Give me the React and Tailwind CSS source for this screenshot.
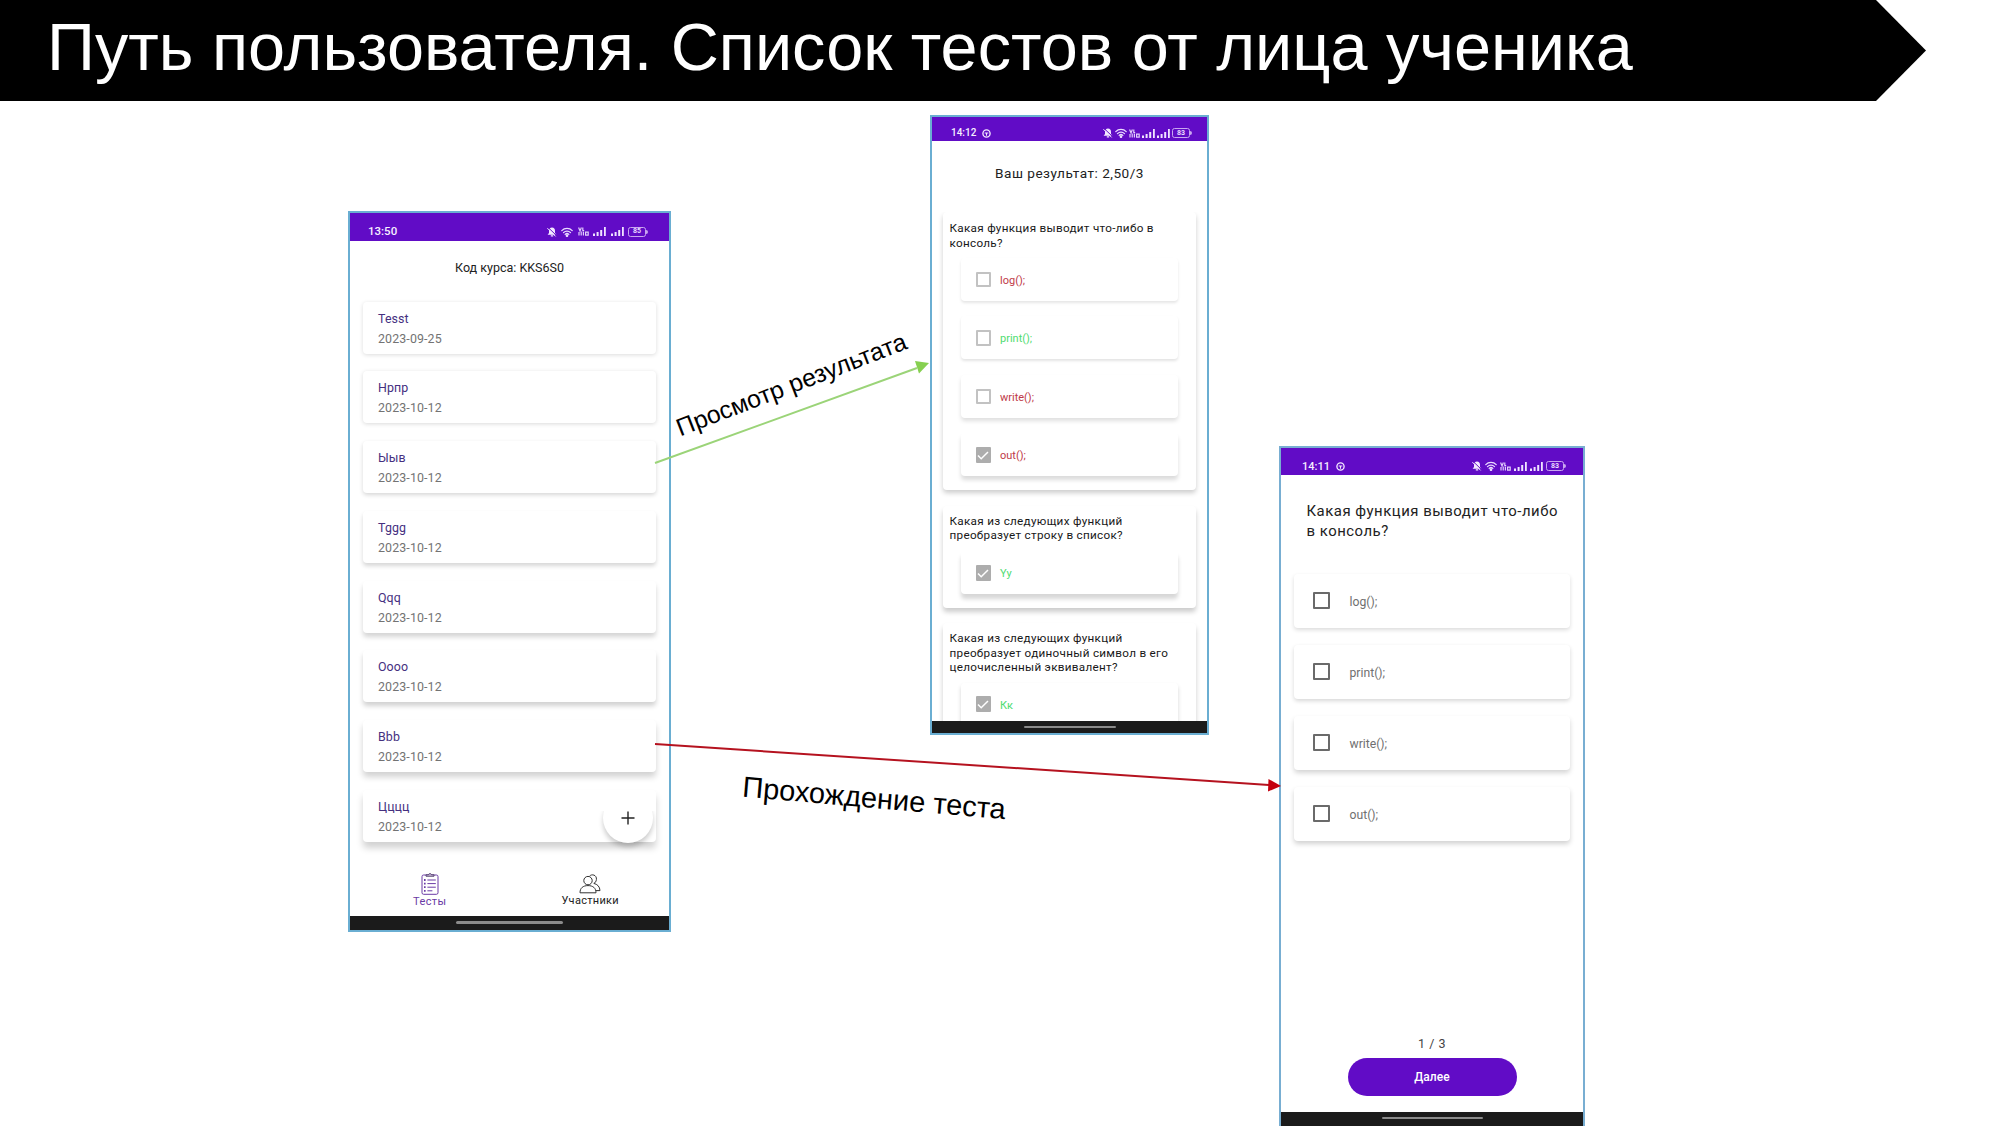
import React from "react";

const BellOff = () => (
  <svg viewBox="0 0 10 10" className="h-[10px] w-[10px] shrink-0">
    <path d="M5 0.6C3 .6 2 2.200 2 4v2L.6 7.800h8.800L8 6V4C8 2.200 7 .6 5 .6ZM3.800 8.200h2.400v1.200H3.800z" fill="#f3e9ff" />
    <path d="M1 .4l8.800 8.400" stroke="#610cc6" strokeWidth="1" />
    <path d="M.4 1.200l8.200 8.200" stroke="#f3e9ff" strokeWidth="1" />
  </svg>
);
const Wifi = () => (
  <svg viewBox="0 0 12 10" className="h-[10px] w-[12px] shrink-0" fill="none" stroke="#eadcff" strokeWidth="1.3" strokeLinecap="round">
    <path d="M.8 3.6C3.6.6 8.4.6 11.2 3.6M2.5 5.6c2-2 5-2 7 0M4.2 7.4c1-1 2.6-1 3.6 0" />
    <circle cx="6" cy="8.7" r=".7" fill="#eadcff" />
  </svg>
);
const Net = () => (
  <svg viewBox="0 0 11 9" className="h-[9px] w-[11px] shrink-0" fill="none" stroke="#e2cffb" strokeWidth="1.2">
    <path d="M.6 .6L2 4 3.4 .6M4.8 .6v3h1.4M1 5v3.6M3.200 4.600v4M5.400 4.800v3.800M7.600 5.200h2.600v2.900H7.600z" />
  </svg>
);
const Bars = () => (
  <svg viewBox="0 0 13 9" className="h-[9px] w-[13px] shrink-0" fill="#f0e4ff">
    <path d="M0 6.5h2V9H0zM3.6 5h2v4h-2zM7.2 3h2v6h-2zM11 0h1.8v9H11z" />
  </svg>
);
const Battery = ({ level }) => (
  <span className="relative flex h-[10px] w-[18px] shrink-0 items-center justify-center rounded-[2.5px] border border-[#c9a6f0] font-['Roboto',sans-serif] text-[7px] leading-none font-bold text-[#eadcff]">
    {level}
    <span className="absolute -right-[2.5px] h-[4px] w-[1.5px] rounded-r bg-[#c9a6f0]" />
  </span>
);
const Gear = () => (
  <svg viewBox="0 0 10 10" className="h-[9px] w-[9px] shrink-0" fill="none" stroke="#f3e9ff">
    <circle cx="5" cy="5" r="4" strokeWidth="1.5" />
    <path d="M3 4.4h4M5 4.400v3" strokeWidth="1.200" />
  </svg>
);

function StatusBar({ time, gear, level, className, gap }) {
  return (
    <div className={`flex shrink-0 items-center bg-[#610cc6] text-[#f6efff] ${className}`}>
      <span className="leading-none font-medium">{time}</span>
      {gear && <span className="ml-[6px] flex"><Gear /></span>}
      <span className={`ml-auto flex items-center ${gap}`}>
        <BellOff />
        <Wifi />
        <Net />
        <Bars />
        <Bars />
        <Battery level={level} />
      </span>
    </div>
  );
}

function HomeBar({ className, handle }) {
  return (
    <div className={`flex shrink-0 items-center justify-center bg-[#1b1b1b] ${className}`}>
      <span className={`rounded-full bg-[#8b8b8b] ${handle}`} />
    </div>
  );
}

const tests = [
  ["Tesst", "2023-09-25"],
  ["Нрпр", "2023-10-12"],
  ["Ыыв", "2023-10-12"],
  ["Tggg", "2023-10-12"],
  ["Qqq", "2023-10-12"],
  ["Оооо", "2023-10-12"],
  ["Bbb", "2023-10-12"],
  ["Цццц", "2023-10-12"],
];
const cardShadows = [
  "shadow-[0_1px_4px_rgba(0,0,0,0.14)]",
  "shadow-[0_1px_4px_rgba(0,0,0,0.15)]",
  "shadow-[0_2px_4px_rgba(0,0,0,0.16)]",
  "shadow-[0_3px_4px_rgba(0,0,0,0.16)]",
  "shadow-[0_4px_5px_rgba(0,0,0,0.17)]",
  "shadow-[0_4px_5px_rgba(0,0,0,0.18)]",
  "shadow-[0_5px_6px_rgba(0,0,0,0.18)]",
  "shadow-[0_6px_7px_rgba(0,0,0,0.18)]",
];

function TestsPhone() {
  return (
    <section className="absolute top-[211px] left-[348px] flex h-[721px] w-[323px] flex-col border-2 border-[#6aaed2] bg-white">
      <StatusBar time="13:50" level="85" gap="gap-[4.5px]" className="h-[28px] pt-[9px] pr-[23px] pl-[18px] text-[11.5px]" />
      <div className="mt-[19px] flex h-[16px] items-center justify-center text-[12.5px] text-[#222]">Код курса: KKS6S0</div>
      <div className="mt-[25.5px] flex flex-col gap-[17.8px] px-[13px]">
        {tests.map(([name, date], i) => (
          <div key={i} className={`flex h-[52px] shrink-0 flex-col rounded-[4px] bg-white pt-[7px] pl-[15px] ${cardShadows[i]}`}>
            <div className="h-[20px] text-[12.4px] leading-[20px] tracking-[0.1px] text-[#45307f]">{name}</div>
            <div className="text-[12.4px] leading-[20px] tracking-[0.12px] text-[#737373]">{date}</div>
          </div>
        ))}
      </div>
      <div className="absolute top-[580px] left-[253px] flex h-[50px] w-[50px] items-center justify-center rounded-full bg-white [clip-path:inset(18px_-12px_-14px_-12px)] shadow-[0_4px_5px_rgba(0,0,0,0.2)]">
        <svg viewBox="0 0 14 14" className="h-[14px] w-[14px]" stroke="#222" strokeWidth="1.4">
          <path d="M7 .5v13M.5 7h13" />
        </svg>
      </div>
      <nav className="mt-auto grid h-[46px] shrink-0 grid-cols-2 text-[11px]">
        <div className="flex flex-col items-center text-[#6a3aa5]">
          <svg viewBox="0 0 18 22" className="mt-[3px] h-[22px] w-[18px]" fill="none" stroke="#6a3aa5" strokeWidth="1">
            <rect x="1" y="2" width="16" height="19.3" rx="1.6" />
            <path d="M5 3.2V1.8h2.4C7.6.3 10.4.3 10.6 1.8H13v1.4z" fill="#d9cce8" stroke="#55406f" />
            <path d="M3 7h1.6M3 10.6h1.6M3 14.2h1.6M3 17.8h1.6" strokeWidth="1.8" />
            <path d="M6.4 7h8.4M6.4 10.6h8.4M6.4 14.2h8.4M6.4 17.8h5" />
          </svg>
          <span className="mt-[0.5px] leading-[14px] tracking-[0.4px]">Тесты</span>
        </div>
        <div className="flex flex-col items-center pl-[2px] text-[#222]">
          <svg viewBox="0 0 22 20" className="mt-[4px] h-[20px] w-[22px]" fill="none" stroke="#333" strokeWidth="1">
            <circle cx="9" cy="6.6" r="4.2" />
            <path d="M1 18.8c0-4.8 3-7.2 8-7.2s8 2.4 8 7.2z" />
            <path d="M10.5 2.2C12.6-.4 18 .8 17.4 5.6c-.2 1.8-1.2 3.2-2.6 3.8 3.6.8 6 3.2 6.2 7.200h-4" />
          </svg>
          <span className="mt-[0.5px] leading-[14px] tracking-[0.3px]">Участники</span>
        </div>
      </nav>
      <HomeBar className="h-[14.5px]" handle="h-[3px] w-[107px]" />
    </section>
  );
}

function CheckBox({ checked }) {
  return checked ? (
    <span className="flex h-[15.5px] w-[15.5px] shrink-0 items-center justify-center rounded-[1px] bg-[#adadad]">
      <svg viewBox="0 0 12 12" className="h-[12px] w-[12px]" fill="none" stroke="#fff" strokeWidth="1.5">
        <path d="M1 6.5l3.2 3.2L11 3" />
      </svg>
    </span>
  ) : (
    <span className="h-[15.5px] w-[15.5px] shrink-0 rounded-[1px] border-2 border-[#c2c2c2]" />
  );
}

const results = [
  {
    lines: ["Какая функция выводит что-либо в", "консоль?"],
    box: "h-[278px] pt-[9px] shadow-[0_3px_5px_rgba(0,0,0,0.2)]",
    gap: "mt-[7.5px]",
    options: [
      ["log();", false, "text-[#c03a48]", "shadow-[0_2px_3px_rgba(0,0,0,0.10)]"],
      ["print();", false, "text-[#4fdc70]", "shadow-[0_2px_3px_rgba(0,0,0,0.11)]"],
      ["write();", false, "text-[#c03a48]", "shadow-[0_3px_4px_rgba(0,0,0,0.13)]"],
      ["out();", true, "text-[#c03a48]", "shadow-[0_4px_4px_rgba(0,0,0,0.14)]"],
    ],
  },
  {
    lines: ["Какая из следующих функций", "преобразует строку в список?"],
    box: "h-[102px] pt-[8px] shadow-[0_4px_5px_rgba(0,0,0,0.2)]",
    gap: "mt-[8.5px]",
    options: [["Yy", true, "text-[#4fdc70]", "shadow-[0_5px_4px_rgba(0,0,0,0.16)]"]],
  },
  {
    lines: ["Какая из следующих функций", "преобразует одиночный символ в его", "целочисленный эквивалент?"],
    box: "h-[140px] pt-[8px] shadow-[0_4px_5px_rgba(0,0,0,0.2)]",
    gap: "mt-[7.5px]",
    options: [["Кк", true, "text-[#4fdc70]", "shadow-[0_3px_4px_rgba(0,0,0,0.17)]"]],
  },
];

function ResultPhone() {
  return (
    <section className="absolute top-[115px] left-[930px] flex h-[620px] w-[279px] flex-col overflow-hidden border-2 border-[#6aaed2] bg-white">
      <StatusBar time="14:12" gear level="83" gap="gap-[2px]" className="h-[24px] pt-[8px] pr-[17px] pl-[19px] text-[10px]" />
      <div className="mt-[23px] flex h-[18px] shrink-0 items-center justify-center text-[13.6px] tracking-[0.48px] text-[#222]">Ваш результат: 2,50/3</div>
      <div className="mt-[30px] flex min-h-0 flex-1 flex-col gap-[15.5px] overflow-hidden px-[11px]">
        {results.map((q, i) => (
          <div key={i} className={`flex shrink-0 flex-col rounded-[4px] bg-white ${q.box}`}>
            <div className="pl-[6.5px] text-[11.7px] leading-[14.7px] tracking-[0.3px] text-[#181818]">
              {q.lines.map((l) => (
                <div key={l} className="whitespace-nowrap">{l}</div>
              ))}
            </div>
            <div className={`flex flex-col gap-[15.5px] px-[18px] ${q.gap}`}>
              {q.options.map(([label, checked, color, shadow]) => (
                <div key={label} className={`flex h-[43px] shrink-0 items-center rounded-[4px] bg-white pl-[14.5px] ${shadow}`}>
                  <CheckBox checked={checked} />
                  <span className={`ml-[9px] pt-[2px] text-[11px] leading-none ${color}`}>{label}</span>
                </div>
              ))}
            </div>
          </div>
        ))}
      </div>
      <HomeBar className="h-[12px]" handle="h-[2px] w-[92px]" />
    </section>
  );
}

const answers = [
  ["log();", "shadow-[0_2px_4px_rgba(0,0,0,0.14)]"],
  ["print();", "shadow-[0_2px_4px_rgba(0,0,0,0.16)]"],
  ["write();", "shadow-[0_3px_5px_rgba(0,0,0,0.17)]"],
  ["out();", "shadow-[0_3px_5px_rgba(0,0,0,0.18)]"],
];

function QuizPhone() {
  return (
    <section className="absolute top-[446px] left-[1279px] flex h-[680px] w-[306px] flex-col border-2 border-b-0 border-[#78aed2] bg-white">
      <StatusBar time="14:11" gear level="83" gap="gap-[3px]" className="h-[27px] pt-[9px] pr-[19px] pl-[21px] text-[11px]" />
      <div className="mt-[26px] pl-[25.5px] text-[14.9px] leading-[20.3px] tracking-[0.52px] whitespace-nowrap text-[#222]">
        <div>Какая функция выводит что-либо</div>
        <div>в консоль?</div>
      </div>
      <div className="mt-[32.4px] flex flex-col gap-[16.9px] px-[13px]">
        {answers.map(([a, shadow]) => (
          <div key={a} className={`flex h-[54px] items-center rounded-[4px] bg-white pl-[18.5px] ${shadow}`}>
            <span className="h-[17px] w-[17px] rounded-[1px] border-2 border-[#6a6a6a]" />
            <span className="ml-[20px] pt-[2px] text-[12.2px] leading-none text-[#707070]">{a}</span>
          </div>
        ))}
      </div>
      <div className="mt-auto flex flex-col items-center">
        <div className="text-[12.5px] leading-[16px] tracking-[0.5px] text-[#444]">1 / 3</div>
        <button className="mt-[6px] mb-[16px] h-[38px] w-[169px] rounded-full bg-[#610cc6] pt-px text-[12px] font-medium tracking-[0.1px] text-white">Далее</button>
      </div>
      <HomeBar className="h-[14.5px]" handle="-mt-[1px] h-[2px] w-[101px]" />
    </section>
  );
}

export default function App() {
  return (
    <main className="relative h-[1126px] w-[2001px] overflow-hidden bg-white font-['Roboto',sans-serif]">
      <header className="flex h-[101px] w-[1926px] items-center bg-black pl-[47px] [clip-path:polygon(0_0,1876px_0,100%_50%,1876px_100%,0_100%)]">
        <h1 className="-mt-[7px] font-['Liberation_Sans',Arial,sans-serif] text-[66.63px] leading-none whitespace-nowrap text-white">Путь пользователя. Список тестов от лица ученика</h1>
      </header>
      <TestsPhone />
      <ResultPhone />
      <QuizPhone />
      <svg viewBox="0 0 2001 1126" className="pointer-events-none absolute inset-0 h-full w-full">
        <path d="M655 463L917 368" stroke="#9bd478" strokeWidth="2" />
        <path d="M915 361L929 363L919 373.5z" fill="#86d050" />
        <path d="M655 744L1269 785" stroke="#b5121f" strokeWidth="2" />
        <path d="M1268.500 779L1281 786L1268 791.500z" fill="#c4000f" />
      </svg>
      <div className="absolute top-[370px] left-[669px] w-[250px] origin-center -rotate-[21.1deg] font-['Liberation_Sans',Arial,sans-serif] text-[24.8px] leading-[28px] whitespace-nowrap text-black">Просмотр результата</div>
      <div className="absolute top-[782px] left-[742px] w-[266px] origin-center rotate-[4.9deg] font-['Liberation_Sans',Arial,sans-serif] text-[29px] leading-[32px] whitespace-nowrap text-black">Прохождение теста</div>
    </main>
  );
}
